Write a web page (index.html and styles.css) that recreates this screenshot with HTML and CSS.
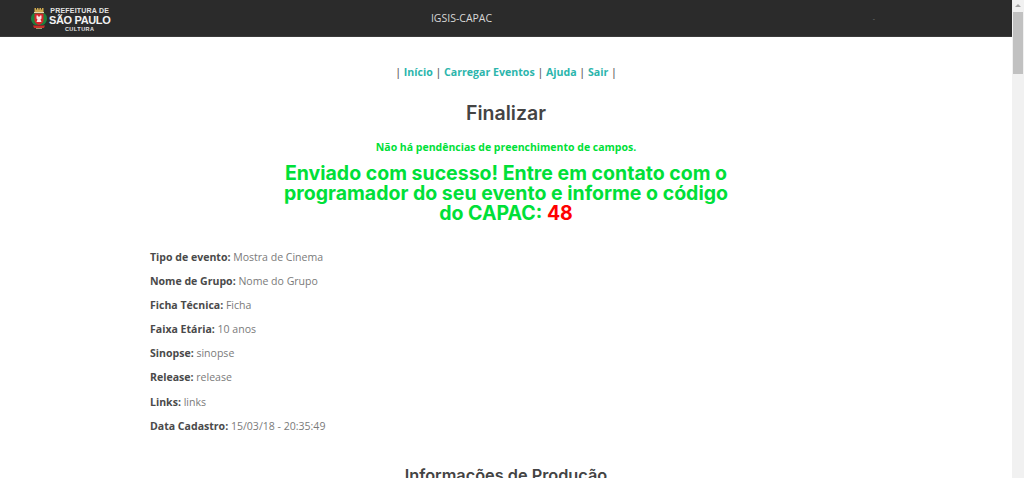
FILE: index.html
```html
<!DOCTYPE html>
<html lang="pt-BR">
<head>
<meta charset="utf-8">
<title>IGSIS-CAPAC</title>
<link rel="stylesheet" href="styles.css">
</head>
<body>
<header class="topbar">
  <div class="brand">
    <svg class="crest" viewBox="0 0 16 21" width="16" height="21" aria-hidden="true">
      <path d="M3.500 0h9v4h-9z" fill="#cfa94e"/>
      <path d="M5.500 0v1.500M8 0v1.500M10.500 0v1.500" stroke="#2b2b2b" stroke-width="1"/>
      <path d="M3 4h10v1H3z" fill="#e6d9b0"/>
      <path d="M3 5C1 6 0 8 0 10.500S1.500 16 4 17h8c2.500-1 4-4 4-6.500S15 6 13 5z" fill="#1d7f3c"/>
      <path d="M3.500 5.500h9v7c0 2-2 3.500-4.500 4.500-2.500-1-4.500-2.500-4.500-4.500z" fill="#d8242b"/>
      <path d="M5.500 7.500h1.500v1h2v-1h1.500v3l-1 1 1 2.500h-5l1-2.500-1-1z" fill="#f4e6e0"/>
      <path d="M2 17.500h12l-1 2.500H3z" fill="#c8322c"/>
      <path d="M5 20h6v1H5z" fill="#9a9a6a"/>
    </svg>
    <div class="brand-text">
      <span class="brand-line1">PREFEITURA DE</span>
      <span class="brand-line2">SÃO PAULO</span>
      <span class="brand-line3">CULTURA</span>
    </div>
  </div>
  <div class="app-title">IGSIS-CAPAC</div>
  <div class="tick">-</div>
</header>

<main class="content">
  <nav class="menu">
    | <a href="#">Início</a> | <a href="#">Carregar Eventos</a> | <a href="#">Ajuda</a> | <a href="#">Sair</a> |
  </nav>
  <h1 class="page-title">Finalizar</h1>
  <p class="notice">Não há pendências de preenchimento de campos.</p>
  <h2 class="success">Enviado com sucesso! Entre em contato com o programador do seu evento e informe o código do CAPAC: <span class="code">48</span></h2>
  <div class="details">
    <p><strong>Tipo de evento:</strong> Mostra de Cinema</p>
    <p><strong>Nome de Grupo:</strong> Nome do Grupo</p>
    <p><strong>Ficha Técnica:</strong> Ficha</p>
    <p><strong>Faixa Etária:</strong> 10 anos</p>
    <p><strong>Sinopse:</strong> sinopse</p>
    <p><strong>Release:</strong> release</p>
    <p><strong>Links:</strong> links</p>
    <p><strong>Data Cadastro:</strong> 15/03/18 - 20:35:49</p>
  </div>
  <h3 class="section-title">Informações de Produção</h3>
</main>

<div class="scrollbar" aria-hidden="true">
  <span class="scroll-arrow"></span>
  <span class="scroll-thumb"></span>
</div>
</body>
</html>
```
FILE: styles.css
```css
html, body {
  margin: 0;
  padding: 0;
  height: 478px;
  overflow: hidden;
  background: #fff;
}
body {
  font-family: "Open Sans", "Liberation Sans", sans-serif;
  font-size: 10.550px;
  color: #555;
}
.topbar {
  height: 36px;
  margin-right: 12px;
  background: #2b2b2b;
  border-bottom: 1px solid #3a3a3a;
  display: grid;
  grid-template-columns: 1fr auto 1fr;
  align-items: center;
}
.brand {
  display: flex;
  align-items: center;
  gap: 2px;
  padding-left: 31px;
}
.crest { flex: none; }
.brand-text {
  display: flex;
  flex-direction: column;
  align-items: center;
  padding-top: 3px;
  color: #e4e4e4;
  font-family: "Liberation Sans", sans-serif;
  font-weight: 700;
  line-height: 1;
}
.brand-line1 { font-size: 7px; line-height: 9px; letter-spacing: .2px; }
.brand-line2 { font-size: 11px; line-height: 11px; color: #f2f2f2; letter-spacing: -.35px; }
.brand-line3 { font-size: 5.500px; line-height: 7px; letter-spacing: .5px; }
.app-title {
  color: #d8d8d8;
  font-size: 10.500px;
  margin-right: 89px;
}
.tick {
  justify-self: end;
  margin-right: 137px;
  color: #777;
  font-size: 7px;
}
.content {
  margin-right: 12px;
  padding-top: 28px;
}
.menu {
  text-align: center;
  font-size: 10.600px;
  font-weight: 600;
  line-height: 15px;
  color: #666;
}
.menu a {
  color: #2bb5ac;
  font-weight: 700;
  text-decoration: none;
}
.page-title {
  margin: 21px 0 0;
  text-align: center;
  font-family: Inter, "Liberation Sans", sans-serif;
  font-size: 19.500px;
  font-weight: 600;
  line-height: 24px;
  color: #444;
}
.notice {
  margin: 15px 0 0;
  text-align: center;
  font-size: 10.500px;
  font-weight: 700;
  line-height: 14px;
  color: #00e038;
}
.success {
  width: 460px;
  margin: 9px auto 0;
  text-align: center;
  font-family: Inter, "Liberation Sans", sans-serif;
  font-size: 19.500px;
  font-weight: 700;
  line-height: 20px;
  color: #00e038;
}
.code { color: #ff0000; }
.details {
  margin: 27px 0 0 150px;
}
.details p {
  margin: 0 0 9.100px;
  line-height: 15px;
  color: #7a7a7a;
}
.details strong {
  color: #4a4a4a;
  font-weight: 700;
}
.section-title {
  margin: 31px 0 0;
  text-align: center;
  font-family: Inter, "Liberation Sans", sans-serif;
  font-size: 16.300px;
  font-weight: 600;
  line-height: 20px;
  color: #444;
}
.scrollbar {
  position: fixed;
  top: 0;
  right: 0;
  bottom: 0;
  width: 12px;
  background: #f1f1f1;
}
.scroll-arrow {
  position: absolute;
  top: 4px;
  left: 3px;
  width: 0;
  height: 0;
  border-left: 3px solid transparent;
  border-right: 3px solid transparent;
  border-bottom: 3px solid #a3a3a3;
}
.scroll-thumb {
  position: absolute;
  top: 12px;
  left: 1px;
  width: 10px;
  height: 62px;
  background: #c1c1c1;
}
```
